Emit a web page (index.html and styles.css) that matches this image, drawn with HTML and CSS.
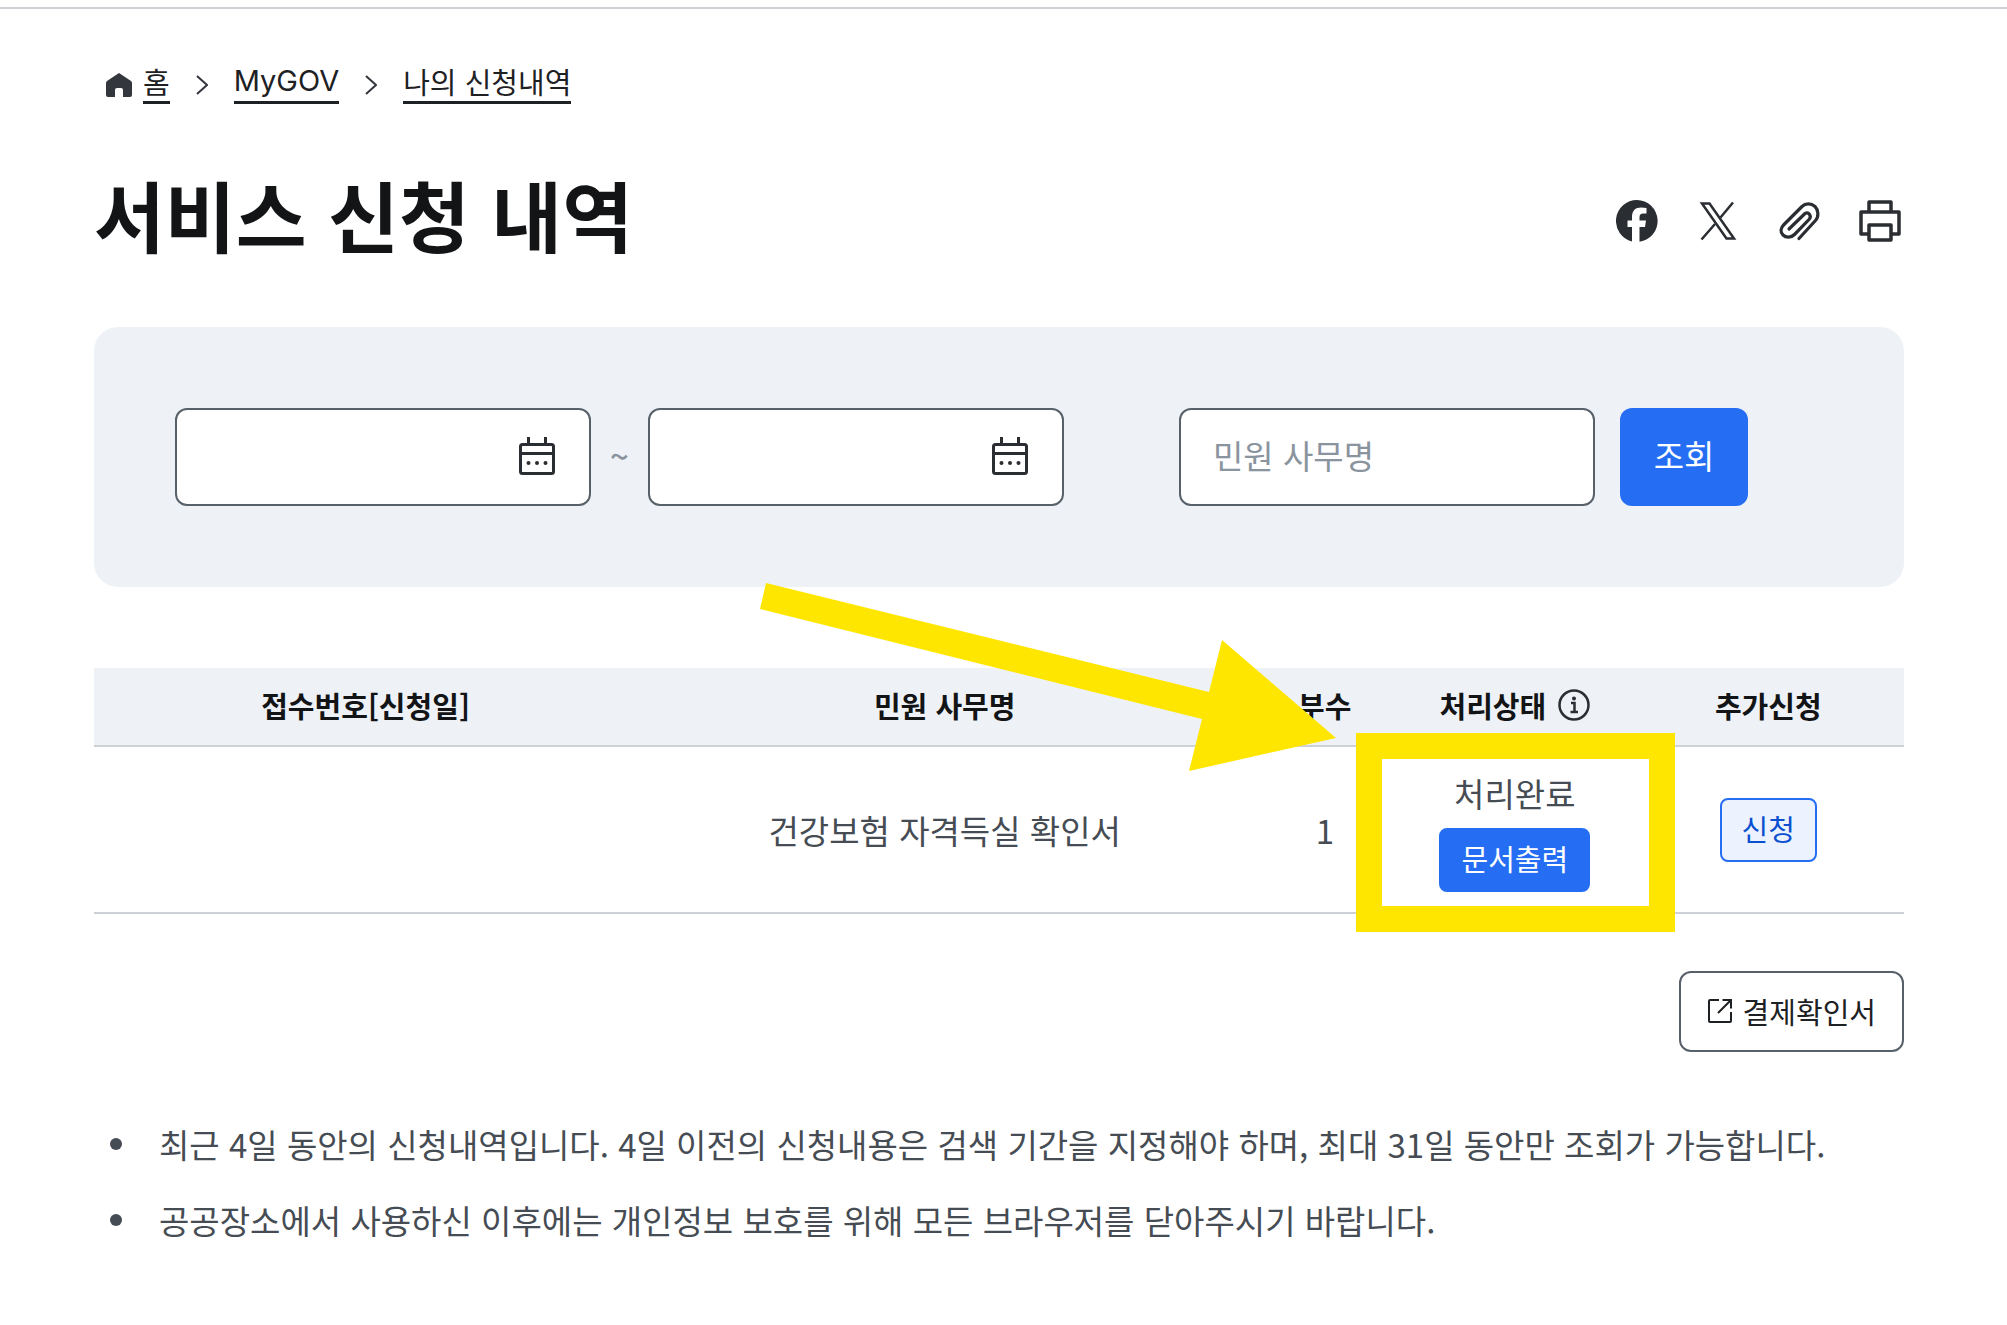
FILE: index.html
```
<!DOCTYPE html>
<html lang="ko">
<head>
    <meta charset="UTF-8">
    <meta name="viewport" content="width=device-width, initial-scale=1.0">
    <title>서비스 신청 내역</title>
    <link rel="stylesheet" href="styles.css">
</head>
<body>
<main class="container">
    <!-- 현재 위치 -->
    <nav class="breadcrumb" aria-label="현재 위치">
        <svg class="home" viewBox="0 0 26 24" aria-hidden="true"><path d="M13 0 25 8Q26 9 26 10V22Q26 24 24 24H17V17Q17 15 15 15H11Q9 15 9 17V24H2Q0 24 0 22V10Q0 9 1 8Z"/></svg>
        <a href="#">홈</a>
        <svg class="chevron" viewBox="0 0 12 20" aria-hidden="true"><path d="M1 1 11 10 1 19"/></svg>
        <a href="#" class="latin">MyGOV</a>
        <svg class="chevron" viewBox="0 0 12 20" aria-hidden="true"><path d="M1 1 11 10 1 19"/></svg>
        <a href="#">나의 신청내역</a>
    </nav>

    <div class="title-row">
        <h1>서비스 신청 내역</h1>
        <div class="share">
            <button type="button" aria-label="페이스북 공유">
                <svg viewBox="0 0 42 42"><path fill="#2a2d31" d="M21 0A21 21 0 0 0 16 41.400V27H11.500V20.500H16V17C16 10.500 19.500 7.500 25 7.500C27 7.500 29 7.700 30.500 8V13.500H27.500C24.500 13.500 23.500 15 23.500 17V20.500H30L29 27H23.500V41.800A21 21 0 0 0 21 0Z"/></svg>
            </button>
            <button type="button" aria-label="X 공유">
                <svg viewBox="0 0 42 42"><g fill="none" stroke="#2a2d31"><path stroke-width="2.500" d="M5 3.500H12.500L37 38.500H29.500Z"/><path stroke-width="2.500" d="M36 2.500 23.500 17.500M18 24 4.500 39.500"/></g></svg>
            </button>
            <button type="button" aria-label="링크 복사">
                <svg viewBox="0 0 42 42"><path fill="none" stroke="#2a2d31" stroke-width="3.200" stroke-linecap="round" stroke-linejoin="round" d="M21 38.500 37.500 20.500C41 16.500 40.500 10 37 6.500C33 3 27.500 3 24 6.500L6 24.500C2.500 28 2 32 5 35C8 38 13 38 16.500 34.500L31 19.500C34 16.500 31 11.500 27 13.500L11 29"/></svg>
            </button>
            <button type="button" aria-label="인쇄">
                <svg viewBox="0 0 42 42"><g fill="none" stroke="#2a2d31" stroke-width="3.500" stroke-linejoin="round"><path d="M10 12V2H32V12"/><path d="M10 34H2V12H40V34H32"/><path d="M10 25H32V40H10Z"/></g></svg>
            </button>
        </div>
    </div>

    <!-- 검색 -->
    <form class="search">
        <div class="field">
            <input type="text" aria-label="시작일">
            <button type="button" class="calendar" aria-label="시작일 선택">
                <svg viewBox="0 0 36 38"><g fill="none" stroke="#2a2d31" stroke-width="3"><rect x="1.500" y="7.500" width="33" height="29" rx="2"/><path d="M1.500 16.500H34.500M9.500 0V7M26.500 0V7"/></g><g fill="#2a2d31"><circle cx="9.500" cy="26" r="2"/><circle cx="18" cy="26" r="2"/><circle cx="26.500" cy="26" r="2"/></g></svg>
            </button>
        </div>
        <span class="tilde">~</span>
        <div class="field">
            <input type="text" aria-label="종료일">
            <button type="button" class="calendar" aria-label="종료일 선택">
                <svg viewBox="0 0 36 38"><g fill="none" stroke="#2a2d31" stroke-width="3"><rect x="1.500" y="7.500" width="33" height="29" rx="2"/><path d="M1.500 16.500H34.500M9.500 0V7M26.500 0V7"/></g><g fill="#2a2d31"><circle cx="9.500" cy="26" r="2"/><circle cx="18" cy="26" r="2"/><circle cx="26.500" cy="26" r="2"/></g></svg>
            </button>
        </div>
        <div class="field field-name">
            <input type="text" placeholder="민원 사무명" aria-label="민원 사무명">
        </div>
        <button type="button" class="btn-search">조회</button>
    </form>

    <!-- 신청 목록 -->
    <table class="list">
        <colgroup>
            <col class="col-no">
            <col class="col-name">
            <col class="col-count">
            <col class="col-state">
            <col class="col-add">
        </colgroup>
        <thead>
        <tr>
            <th scope="col">접수번호[신청일]</th>
            <th scope="col">민원 사무명</th>
            <th scope="col">부수</th>
            <th scope="col">
                <span class="state-head">처리상태
                    <svg class="info" viewBox="0 0 32 32" aria-hidden="true"><circle cx="16" cy="16" r="14.500" fill="none" stroke="#2a2d31" stroke-width="2.500"/><circle cx="16" cy="9.500" r="2" fill="#2a2d31"/><path d="M13 14H16.500V22.500M12.500 23H20" fill="none" stroke="#2a2d31" stroke-width="2.500"/></svg>
                </span>
            </th>
            <th scope="col">추가신청</th>
        </tr>
        </thead>
        <tbody>
        <tr>
            <td></td>
            <td>건강보험 자격득실 확인서</td>
            <td>1</td>
            <td class="state">
                <div class="state-body">
                    <span>처리완료</span>
                    <button type="button" class="btn btn-primary">문서출력</button>
                </div>
                <div class="highlight"></div>
            </td>
            <td><button type="button" class="btn btn-light">신청</button></td>
        </tr>
        </tbody>
    </table>

    <div class="actions">
        <button type="button" class="btn-receipt">
            <svg viewBox="0 0 26 26" aria-hidden="true"><path fill="none" stroke="#1e2124" stroke-width="2" d="M12 2H3Q2 2 2 3V23Q2 24 3 24H23Q24 24 24 23V14M15.500 2H24V10.500M24 2 11 15"/></svg>
            결제확인서
        </button>
    </div>

    <ul class="notes">
        <li>최근 4일 동안의 신청내역입니다. 4일 이전의 신청내용은 검색 기간을 지정해야 하며, 최대 31일 동안만 조회가 가능합니다.</li>
        <li>공공장소에서 사용하신 이후에는 개인정보 보호를 위해 모든 브라우저를 닫아주시기 바랍니다.</li>
    </ul>

    <!-- 안내 화살표 -->
    <svg class="arrow" viewBox="0 0 576 188" aria-hidden="true"><path fill="#ffe600" d="M6 0 449 109 462 57 576 155 429 188 442 136 0 26Z"/></svg>
</main>
</body>
</html>
```
FILE: styles.css
```
* {
    box-sizing: border-box;
}
body {
    margin: 0;
    padding-top: 7px;
    background-color: #fff;
    color: #464c53;
    font-family: "Noto Sans CJK KR", "Noto Sans", sans-serif;
    font-size: 33px;
    line-height: 50px;
}
button,
input {
    font: inherit;
}
button {
    cursor: pointer;
}
.container {
    position: relative;
    padding: 52px 103px 40px 94px;
    border-top: 2px solid #cdd1d5;
}

/* 현재 위치 */
.breadcrumb {
    display: flex;
    align-items: center;
    padding-left: 12px;
    font-size: 29px;
    line-height: 40px;
}
.breadcrumb a {
    color: #1e2124;
    text-decoration: none;
    border-bottom: 3px solid #1e2124;
}
.latin {
    font-family: Inter, sans-serif;
}
.home {
    width: 26px;
    height: 24px;
    margin-top: 4px;
    margin-right: 11px;
    fill: #33363d;
}
.chevron {
    width: 12px;
    height: 20px;
    margin: 4px 26px 0;
    fill: none;
    stroke: #33363d;
    stroke-width: 2;
}

/* 제목 */
.title-row {
    display: flex;
    align-items: center;
    justify-content: space-between;
    margin-top: 52px;
}
h1 {
    margin: 0;
    padding-bottom: 14px;
    color: #131416;
    font-size: 77px;
    line-height: 116px;
}
.share {
    display: flex;
    gap: 39px;
    padding-right: 3px;
}
.share button {
    width: 42px;
    height: 42px;
    padding: 0;
    border: none;
    background: none;
}
.share svg {
    display: block;
}

/* 검색 */
.search {
    display: flex;
    align-items: center;
    margin-top: 41px;
    padding: 81px;
    background-color: #eef2f7;
    border-radius: 24px;
}
.field {
    position: relative;
    flex: 0 1 416px;
}
.field input {
    display: block;
    width: 100%;
    height: 98px;
    padding: 0 32px 4px;
    background-color: #fff;
    border: 2px solid #58616a;
    border-radius: 12px;
    color: #1e2124;
}
.field input::placeholder {
    color: #8a949e;
    opacity: 1;
}
.field-name {
    margin-left: 115px;
}
.calendar {
    position: absolute;
    top: 29px;
    right: 36px;
    width: 36px;
    height: 38px;
    padding: 0;
    border: none;
    background: none;
}
.calendar svg {
    display: block;
}
.tilde {
    width: 57px;
    padding-bottom: 4px;
    color: #8a949e;
    font-weight: 500;
    text-align: center;
}
.btn-search {
    width: 128px;
    height: 98px;
    margin-left: 25px;
    padding: 0 0 4px;
    background-color: #256ef4;
    border: none;
    border-radius: 12px;
    color: #fff;
}

/* 신청 목록 */
.list {
    width: 100%;
    margin-top: 81px;
    table-layout: fixed;
    border-collapse: separate;
    border-spacing: 0;
    text-align: center;
}
.col-no {
    width: 30%;
}
.col-name {
    width: 34%;
}
.col-count {
    width: 8%;
}
.col-state {
    width: 13%;
}
.col-add {
    width: 15%;
}
.list th {
    height: 79px;
    padding: 0 0 4px;
    background-color: #eef2f7;
    border-bottom: 2px solid #cdd1d5;
    color: #131416;
    font-size: 29px;
    line-height: 44px;
}
.list td {
    height: 167px;
    padding: 0;
    border-bottom: 2px solid #cdd1d5;
}
.state-head {
    display: flex;
    align-items: center;
    justify-content: center;
    gap: 12px;
}
.info {
    width: 32px;
    height: 32px;
}
.state {
    position: relative;
}
.state-body {
    display: flex;
    flex-direction: column;
    align-items: center;
    gap: 10px;
}
.highlight {
    position: absolute;
    top: -14px;
    right: -43px;
    bottom: -20px;
    left: -41px;
    border: 26px solid #ffe600;
    pointer-events: none;
}
.btn {
    height: 64px;
    padding: 0 20px 4px;
    border: 2px solid #256ef4;
    border-radius: 8px;
    font-size: 29px;
    line-height: 44px;
}
.btn-primary {
    background-color: #256ef4;
    color: #fff;
}
.btn-light {
    background-color: #ecf2fe;
    color: #0b50d0;
}

/* 결제확인서 */
.actions {
    display: flex;
    justify-content: flex-end;
    margin-top: 57px;
}
.btn-receipt {
    display: flex;
    align-items: center;
    gap: 10px;
    height: 81px;
    padding: 0 26px 2px;
    background-color: #fff;
    border: 2px solid #58616a;
    border-radius: 12px;
    color: #1e2124;
    font-size: 29px;
}
.btn-receipt svg {
    width: 26px;
    height: 26px;
}

/* 안내 문구 */
.notes {
    display: flex;
    flex-direction: column;
    gap: 26px;
    margin: 67px 0 0;
    padding: 0;
    list-style: none;
}
.notes li {
    display: flex;
    align-items: center;
}
.notes li::before {
    content: "";
    width: 12px;
    height: 12px;
    margin: 0 37px 0 16px;
    background-color: #464c53;
    border-radius: 50%;
}

.arrow {
    position: absolute;
    top: 574px;
    left: 760px;
    width: 576px;
    height: 188px;
    pointer-events: none;
}
```
